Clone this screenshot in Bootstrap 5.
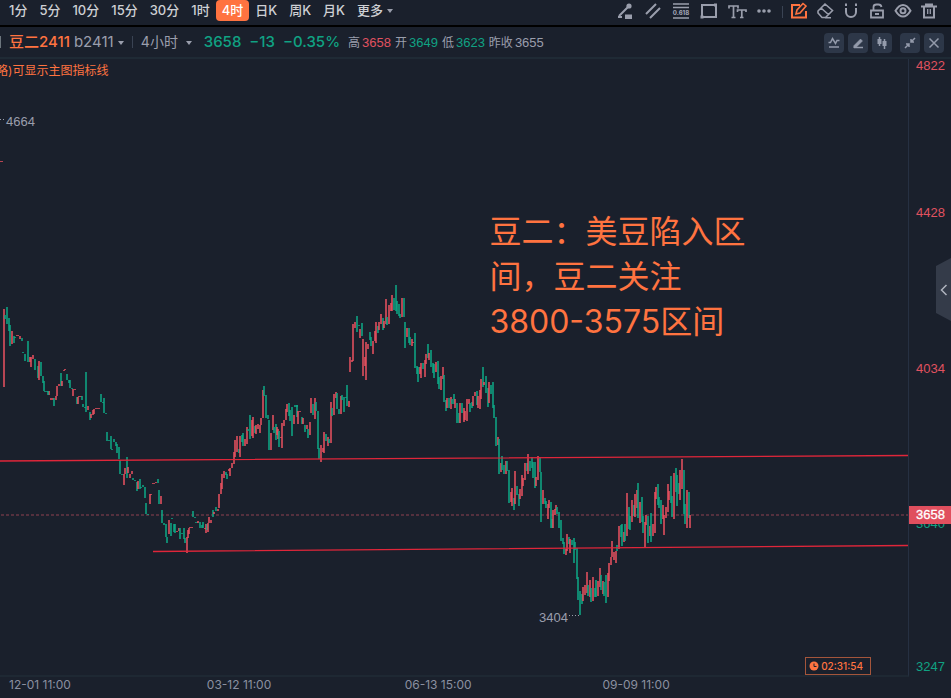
<!DOCTYPE html>
<html lang="zh-CN">
<head>
<meta charset="utf-8">
<meta name="viewport" content="width=device-width, initial-scale=1">
<title>豆二2411</title>
<link href="https://cdn.jsdelivr.net/npm/bootstrap@5.3.0/dist/css/bootstrap.min.css" rel="stylesheet">
<style>
:root{--bg:#1a202c;--rise:#e05260;--fall:#10a283;--hot:#ff7340;--dim:#9a9eac;--rule:#222b38}
body{background:var(--bg);color:var(--dim);font-family:Inter,"Noto Sans CJK SC",sans-serif;font-size:13px;line-height:20px;overflow:hidden}
button{background:none;border:0;color:inherit;padding:0}
.rise{color:var(--rise)}.fall{color:var(--fall)}.hot{color:var(--hot)}
.topbar{height:27px;border-bottom:2px solid #000;padding:0 12px 0 3px}
.periods button{height:21px;padding:0 6px 2px;color:#ced0d4;font-weight:500;white-space:nowrap}
.periods .now{background:var(--hot);color:#fff;border-radius:4px}
.caret{display:inline-block;border:3px solid transparent;border-top:4px solid var(--dim);border-bottom:0;vertical-align:middle}
.tool{padding-top:2px}
.tool svg{display:block;width:20px;height:20px;fill:none;stroke:currentColor;stroke-width:2}
.tool .solid{fill:currentColor;stroke:none}
.draw{gap:8px}.manage{gap:6px}
.split{width:1px;height:12px;background:#3a4353}
.tool .split{margin:0 6px 0 7px}
.quote{height:32px;border-bottom:2px solid #1f2a35;padding-right:7px;white-space:nowrap}
.name{font-size:15px;font-weight:500}
.code{font-size:15px}
.span{font-size:14px}
.last{font-size:15px;font-weight:500;gap:8px}
.ohlc{font-size:12px;gap:4px;padding-top:2px}
.ohlc b{font:13px "Liberation Sans",sans-serif;margin-left:2px}
.squares{padding-top:2px}
.sq{width:20px;height:20px;border-radius:4px;background:#2d3748}
.sq svg{width:20px;height:20px;display:block;fill:none;stroke:#949bab;stroke-width:1.5}
.plot{border-right:1px solid #263042;border-bottom:2px solid #1e2833;min-width:0}
.plot>svg{position:absolute;inset:0;width:100%;height:100%}
.plot text{font:13px "Liberation Sans",sans-serif;fill:var(--dim)}
.hint{font-size:12px;margin-left:-4px;line-height:24px}
.memo{position:absolute;left:53.9%;top:24.4%;font-size:32px;line-height:45px;white-space:nowrap}
.timer{position:absolute;right:37px;bottom:0;height:18px;border:1px solid #a4553b;font-size:10px;font-weight:500;padding:0 7px 0 3px;gap:2px}
.axis{width:42px;font:13px/14px "Liberation Sans",sans-serif;padding:0 0 3px 7px}
.tag{position:absolute;left:0;right:0;top:72.4%;height:18px;line-height:18px;background:#e04f5e;color:#fff;padding-left:7px;-webkit-text-stroke:.3px #fff}
.grip{position:absolute;right:0;top:32.2%;width:15px;height:63px}
.dates{height:21px;font-size:12px;line-height:16px;padding-left:9px;color:#8b90a0}
.dates span{width:21%;flex:none}
</style>
<script src="https://cdn.jsdelivr.net/npm/bootstrap@5.3.0/dist/js/bootstrap.bundle.min.js"></script>
</head>
<body>
<div class="d-flex flex-column vh-100">
<header class="topbar d-flex align-items-start justify-content-between">
  <nav class="periods d-flex">
    <button>1分</button><button>5分</button><button>10分</button><button>15分</button><button>30分</button><button>1时</button><button class="now">4时</button><button>日K</button><button>周K</button><button>月K</button><button>更多<i class="caret ms-1"></i></button>
  </nav>
  <div class="d-flex align-items-center tool">
    <div class="draw d-flex">
      <button aria-label="线段"><svg viewBox="0 1 20 20"><path d="M3 16h4M4 15 13 6"/><circle class="solid" cx="14" cy="5" r="2.6"/><path class="solid" d="M10 13.500h7v4.500h-7z"/></svg></button>
      <button aria-label="平行线"><svg viewBox="0 1 20 20"><path d="M3 13 13 3M7 17 17 7"/></svg></button>
      <button aria-label="黄金分割"><svg viewBox="0 1 20 20"><path d="M2 3h16M2 6.500h16M2 17h16" stroke-width="1.500"/><text class="solid" x="10" y="14" text-anchor="middle" font-size="6" font-weight="800">0.618</text></svg></button>
      <button aria-label="矩形"><svg viewBox="0 1 20 20"><path d="M3 4h14v12H3z"/><path class="solid" d="M15 2.500h3v3h-3zM1.500 14.500h3v3h-3z"/></svg></button>
      <button aria-label="文字"><svg viewBox="0 1 20 20"><path d="M2 7.500V5h9v2.500M6.500 5v12M4.500 16.500h4M10.500 11V9H19v2M14.800 9v8M13 16.500h3.500" stroke-width="1.700"/></svg></button>
      <button aria-label="更多工具"><svg viewBox="1 1 20 20"><g class="solid"><circle cx="5" cy="10" r="1.800"/><circle cx="10" cy="10" r="1.800"/><circle cx="15" cy="10" r="1.800"/></g></svg></button>
    </div>
    <span class="split"></span>
    <div class="manage d-flex">
      <button class="hot" aria-label="编辑"><svg viewBox="0 1 20 20"><path d="M11 4H3v12.500h14V10"/><path d="m7 13 1-4 6-6.500 3 2.500-6 7z" stroke-width="1.600"/></svg></button>
      <button aria-label="橡皮"><svg viewBox="0 1 20 20"><path d="m3 10 7-7 7.500 6.500-7 7H7L3 12zM6 7l8 7M10 16.700h6" stroke-width="1.600"/></svg></button>
      <button aria-label="磁吸"><svg viewBox="0 1 20 20"><path d="M5 7v4a5 5 0 0 0 10 0V7M5 2.500v2.500M15 2.500v2.500"/></svg></button>
      <button aria-label="锁定"><svg viewBox="0 1 20 20"><path d="M4 9.500h12v7H4zM6.500 9V6q0-2.500 3-2.500h2q2.500 0 3 2.500M8 13h4" stroke-width="1.800"/></svg></button>
      <button aria-label="显示"><svg viewBox="0 1 20 20"><path d="M2.500 9.700Q6 4 10 4t7.500 5.700Q14 15.500 10 15.500T2.500 9.700z"/><circle cx="10" cy="9.700" r="2.500"/></svg></button>
      <button aria-label="删除"><svg viewBox="0 1 20 20"><path d="M2 5.500h16M6 3.500h8M5 6v10.500h10V6"/><path d="M8.700 8v5M11.300 8v5" stroke-width="1.300"/></svg></button>
    </div>
  </div>
</header>

<section class="quote d-flex align-items-center">
  <span class="split bg-secondary"></span>
  <span class="name hot ms-2">豆二2411</span>
  <button class="code ms-1">b2411 <i class="caret"></i></button>
  <span class="split ms-2 me-2"></span>
  <button class="span">4小时&nbsp; <i class="caret"></i></button>
  <div class="last fall d-flex ms-2 ps-1"><span>3658</span><span>−13</span><span>−0.35%</span></div>
  <div class="ohlc d-flex align-items-center ms-2"><span>高<b class="rise">3658</b></span><span>开<b class="fall">3649</b></span><span>低<b class="fall">3623</b></span><span>昨收<b>3655</b></span></div>
  <div class="squares d-flex gap-1 ms-auto">
    <button class="sq" aria-label="指标"><svg viewBox="0 0 20 20"><path d="M4.500 9.500h2l2-4 3 5 1.500-3h2.500M5 14h10"/></svg></button>
    <button class="sq" aria-label="画线"><svg viewBox="0 0 20 20"><path d="m6 12.500 6.500-6.500 2 2L8 14.500H5.500z" fill="#949bab" stroke-width=".5"/><path d="M6 14.500h9"/></svg></button>
    <button class="sq" aria-label="K线"><svg viewBox="0 0 20 20"><path d="M7.500 4v9M12.500 6v10"/><path d="M7.500 6v5M12.500 8v5" stroke-width="4"/></svg></button>
    <button class="sq ms-1" aria-label="缩小"><svg viewBox="0 0 20 20"><path d="m15 5-4 4M11 6v3h3M5 15l4-4M9 14v-3H6"/></svg></button>
    <button class="sq" aria-label="关闭"><svg viewBox="0 0 20 20"><path d="m5.500 5.500 9 9M14.500 5.500l-9 9"/></svg></button>
  </div>
</section>

<main class="d-flex flex-fill position-relative">
  <div class="plot flex-fill position-relative">
    <svg viewBox="0 59 908 616" preserveAspectRatio="none" aria-label="K线图">
      <path d="M1 515H908" stroke="#54303e" stroke-width="2" stroke-dasharray="3 2"/>
      <g id="bars"></g>
      <path d="M0 461 908 455.500M153 551.500 908 545.500" stroke="#e0263a" stroke-width="1.300" fill="none"/>
      <path d="M0 119.500h5M569 615.500h11" stroke="#9a9eac" stroke-dasharray="1 2"/>
      <text x="6" y="126">4664</text><text x="539" y="622">3404</text>
    </svg>
    <div class="hint hot position-relative">略)可显示主图指标线</div>
    <p class="memo hot m-0">豆二：美豆陷入区<br>间，豆二关注<br>3800-3575区间</p>
    <div class="timer hot d-flex align-items-center"><svg width="10" height="10" viewBox="0 0 10 10"><circle cx="5" cy="5" r="4.500" fill="#ff7340"/><path d="M5 2.500V5.500h2.500" fill="none" stroke="#1b212d"/></svg>02:31:54</div>
  </div>
  <div class="axis rise position-relative d-flex flex-column">
    <span style="flex:147 1 0">4822</span><span style="flex:155 1 0">4428</span><span style="flex:155 1 0">4034</span><span class="fall" style="flex:143 1 0">3640</span><span class="fall">3247</span>
    <span class="tag">3658</span>
  </div>
  <button class="grip" aria-label="展开"><svg class="d-block" width="15" height="63" viewBox="0 0 15 63"><path d="M15 0 0 8V55l15 8z" fill="#343b49"/><path d="m10.500 27-5 5 5 5" fill="none" stroke="#b0b4bf" stroke-width="1.500"/></svg></button>
</main>
<footer class="dates d-flex"><span>12-01 11:00</span><span>03-12 11:00</span><span>06-13 15:00</span><span>09-09 11:00</span></footer>
</div>
<script>
// Each session: origin x, origin y, then bars "colour centre top bottom [width]" in thirds of a pixel.
const sessions = [
[0,90,"r4 213 216 10,r12 657 891,g15 675 687,g21 651 702,g27 684 723,g30 705 768,r36 723 762,g42 738 759,g45 741 744,r53 735 738 10,r60 738 747,g66 744 753,g69 786 789,g75 792 813,g84 753 816,r90 801 816,r93 801 831,r99 795 807,g105 807 840,g114 828 864,r117 813 870,g123 816 858,g129 858 880,g132 873 903,g138 903 906 12,r147 903 915,g144 903 915,r155 924 930 12,g162 924 948,r168 918 930,r171 888 918,r177 882 888 8,g183 849 888,r186 873 888,r191 840 843,r195 837 840,g201 852 870,g207 870 880,g210 870 894,g215 894 897,r219 897 918,r224 897 900,g231 921 942,r234 921 942,r240 918 921 10,g246 918 930,g249 942 951,g255 951 954,g258 846 966,r264 948 960,g270 966 990,r273 972 984,r279 960 975,r282 957 972,r292 954 957 15,g303 912 936,g308 936 939,g312 924 969,g318 969 972"],
[90,360,"g51 216 243,g57 240 243,g63 228 267,g66 267 270,g72 237 246,g78 246 258,g81 252 279,g87 261 297,g90 300 342,g96 342 345,r102 342 375,r105 324 342,g111 291 354,r114 321 339,r120 342 354,r126 333 342,g129 354 360,g135 360 363,g141 366 393,r144 363 387,g150 357 387,g153 381 384,g159 375 381,g165 381 414,g168 429 462,g174 462 465,r180 402 432,r183 402 405,r190 369 372 10,r198 366 369,g204 357 369,g207 390 432,r213 408 432,g216 450 489,g222 489 495,g228 492 531,g231 531 549,r237 480 522,g243 489 528,g246 474 477,g252 492 516,g255 492 519,r261 513 516,r267 504 513,g270 504 537,g276 519 522,g282 504 537,g285 534 549,r291 531 579,r294 510 534,r297 504 522,r303 501 504 12,g309 453 471,g315 471 474,g320 486 489 10,r324 483 489,g330 486 504,g336 495 504,g339 486 504,r345 504 507,r348 492 519,g351 492 510,r354 489 516,r357 471 489,r363 480 489,g369 450 471,r372 456 462,g378 441 453,r384 447 453,r387 402 444,r393 369 402,r396 342 387,r402 333 354,g408 336 345,g411 342 357,r417 327 333,r420 324 348,r426 309 324,r432 276 312"],
[220,360,"r45 240 291,r51 228 276,g57 267 279,r60 228 291,g66 225 246,g69 219 258,r75 237 258,r81 201 252,g84 207 213,g90 165 237,r96 180 228,r99 171 234,g105 198 219,r108 195 222,r114 192 207,r120 195 219,r123 174 195,r129 90 174,g132 78 108,g138 105 174,g144 165 177,g147 180 270,r153 219 270,r159 165 210,g162 201 219,g168 192 240,r171 201 225,r174 207 237,g177 213 261,r183 231 234,r186 189 264,r192 180 198,r198 147 180,r201 132 156,g207 129 168,g210 150 183,g216 141 228,r222 165 192,g228 135 141 12,g231 135 171,r234 153 192,r240 153 156,g246 171 192,r249 174 192,g255 195 216,r261 195 207,g264 207 234,r270 186 225,r273 114 159,g279 132 165,r285 114 177,g288 126 153,g294 153 267,g297 264 297,r303 255 306,r309 264 276,r312 216 279,g318 222 243,r324 231 258,g327 237 249,r333 126 249,g336 144 168,r342 102 165,r348 96 114,g351 99 147,g357 147 162,r363 108 162,g366 105 120,g372 111 156,g378 111 114,g381 75 138,r387 123 141"],
[330,270,"r60 261 306,r66 270 276,r69 162 273,r75 156 174,g81 138 186,g87 165 168,r90 177 204,g96 159 198,r99 207 318,r105 261 288,r108 216 330,r114 222 237,g120 186 210,g123 201 228,r129 213 252,r135 183 213,r138 156 219,g144 168 189,r147 156 180,r153 132 162,g159 144 180,r162 153 174,r168 87 162,g171 141 165,r177 105 162,r183 99 123,r186 75 123,g192 84 120,g198 45 123,g201 93 132,g207 102 138,g210 132 144,r216 84 141,g222 84 141,g225 156 234,r231 174 201,g237 174 219,g240 201 225,r246 207 228,r250 216 219,g255 189 294,g261 288 312,g264 291 336,r270 291 312,r273 279 324,g279 279 297,r285 270 321,r288 252 282,g294 222 264,r297 249 270,g303 240 291,g309 279 309,g312 282 324,r318 276 306,g324 273 342,g327 321 357,r333 318 360,r339 291 327,g342 315 396,g348 390 423,r351 384 414,g357 384 414,r363 381 417,g366 387 402,g372 372 402,r375 387 414,g381 399 459,g387 429 459,r390 399 459,g396 399 429,r402 414 456,r405 423 450,r411 387 453,r417 387 402,g420 399 426,g426 396 414,r429 378 408,r435 366 378,g441 363 405,r444 378 414,r450 360 417,r453 327 387,g459 291 351,r462 336 345,g468 318 369,g474 354 411,r477 336 399,g483 345 372,g489 336 414,g492 405 444"],
[470,360,"g78 171 258,r84 231 255,g87 237 342,r93 309 336,g96 288 330,g102 315 342,r108 303 342,g111 303 333,g117 330 429,r123 396 426,r126 384 438,g132 414 450,r135 333 432,g141 378 405,g147 402 438,r150 387 417,r156 345 408,r159 354 378,r165 309 360,g171 309 333,r174 282 342,g180 303 333,g186 291 324,g189 306 354,g195 306 384,r198 351 378,r204 288 360,g210 291 336,g213 336 486,r219 390 432,g225 414 432,g228 423 444,r234 432 477,r237 420 444,g243 426 504,g246 477 504,r249 450 504,r255 447 465,r258 435 450,g261 441 462,g267 456 504,g273 480 543,g279 534 552,g282 546 582,r288 567 585,r291 522 573,g297 531 552,r300 537 579,g306 540 555,g312 534 609,g315 546 570,g321 564 657,g324 651 720,g330 693 765,g336 702 732,r339 681 723,r345 675 705,r351 636 699,g354 675 708,r360 660 711,g363 684 726,r369 651 723,g375 684 711,g378 660 711,r384 663 708,r390 624 681"],
[580,440,"g63 405 450,r69 423 462,g72 426 468,g78 405 489,r84 399 471,r87 369 423,r93 351 375,r96 303 351,r102 336 360,r108 333 369,g111 315 333,r117 258 327,g123 255 291,g126 252 318,r132 276 306,g135 252 303,r141 159 288,g147 201 267,g150 228 270,r156 180 246,g162 195 228,r165 162 231,r171 150 204,g174 129 234,r180 186 249,g186 171 246,g189 228 279,r195 246 321,r198 225 255,g204 228 309,r210 258 288,g213 219 306,r219 252 288,r225 156 279,r228 141 177,g234 132 195,g237 171 204,g243 180 252,r249 195 237,r252 225 285,r258 201 234,r264 132 216,r267 153 180,g273 108 189,g276 168 231,r282 99 237,g288 84 156,g291 105 198,g297 129 162,r300 90 180,r306 57 147,g312 90 222,g315 192 252,r321 150 264,g327 156 234,r330 225 264"]];
document.getElementById('bars').innerHTML = sessions.map(([ox, oy, list]) =>
  list.split(',').map(s => {
    const [x, t, b, w = 6] = s.slice(1).split(' ').map(Number);
    return `<rect x="${ox + (x - w / 2) / 3}" y="${oy + t / 3}" width="${w / 3}" height="${(b - t) / 3}" fill="${s[0] === 'r' ? '#ec5160' : '#0da987'}" fill-opacity=".75" shape-rendering="crispEdges"/>`;
  }).join('')).join('');
</script>
</body>
</html>
